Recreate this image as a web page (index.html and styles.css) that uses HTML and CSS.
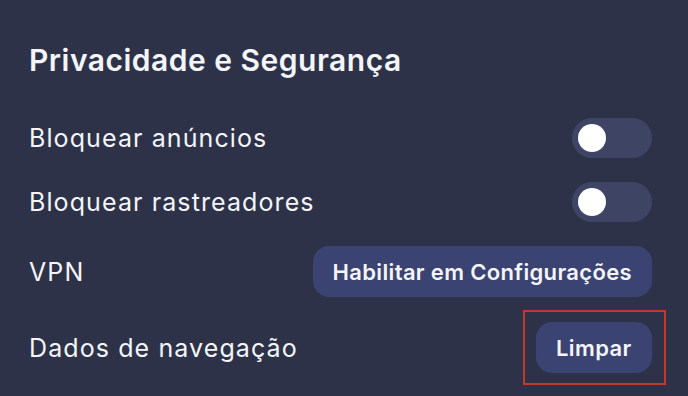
FILE: index.html
```html
<!DOCTYPE html>
<html lang="pt">
<head>
<meta charset="utf-8">
<link rel="stylesheet" href="styles.css">
</head>
<body>
<main class="panel">
  <h1 class="title">Privacidade e Segurança</h1>
  <div class="rows">
    <div class="row">
      <span class="label">Bloquear anúncios</span>
      <span class="toggle"><span class="knob"></span></span>
    </div>
    <div class="row">
      <span class="label">Bloquear rastreadores</span>
      <span class="toggle"><span class="knob"></span></span>
    </div>
    <div class="row">
      <span class="label">VPN</span>
      <button class="btn">Habilitar em Configurações</button>
    </div>
    <div class="row">
      <span class="label">Dados de navegação</span>
      <span class="highlight-wrap">
        <button class="btn btn-small">Limpar</button>
        <span class="highlight"></span>
      </span>
    </div>
  </div>
</main>
</body>
</html>
```

FILE: styles.css
```css
html, body {
  margin: 0;
  padding: 0;
  background: #2d3248;
  width: 688px;
  height: 396px;
  overflow: hidden;
}
.panel {
  font-family: Inter, "Noto Sans", sans-serif;
  color: #f4f5f8;
  padding: 0 36px 0 29px;
}
.title {
  margin: 0;
  padding-top: 40px;
  font-size: 30px;
  font-weight: 600;
  line-height: 40px;
  letter-spacing: 0.5px;
}
.rows {
  display: flex;
  flex-direction: column;
  gap: 24px;
  margin-top: 38px;
}
.row {
  display: flex;
  align-items: center;
  justify-content: space-between;
}
.label {
  font-size: 25px;
  font-weight: 400;
  letter-spacing: 1.1px;
}
.toggle {
  width: 80px;
  height: 40px;
  border-radius: 20px;
  background: #3e4464;
  display: flex;
  align-items: center;
  padding-left: 6px;
  box-sizing: border-box;
}
.knob {
  width: 28px;
  height: 28px;
  border-radius: 50%;
  background: #ffffff;
}
.btn {
  font-family: Inter, "Noto Sans", sans-serif;
  height: 51px;
  border: none;
  border-radius: 16px;
  background: #3a4372;
  color: #f4f5f8;
  font-size: 22px;
  font-weight: 600;
  letter-spacing: 0.35px;
  padding: 0 20px;
  white-space: nowrap;
}
.row:last-child {
  margin-top: 1px;
}
.btn-small {
  padding: 0 20.5px;
}
.highlight-wrap {
  position: relative;
  display: flex;
}
.highlight {
  position: absolute;
  left: -13px;
  top: -12px;
  right: -14px;
  bottom: -12px;
  border: 2px solid #c0392b;
  pointer-events: none;
}
```
